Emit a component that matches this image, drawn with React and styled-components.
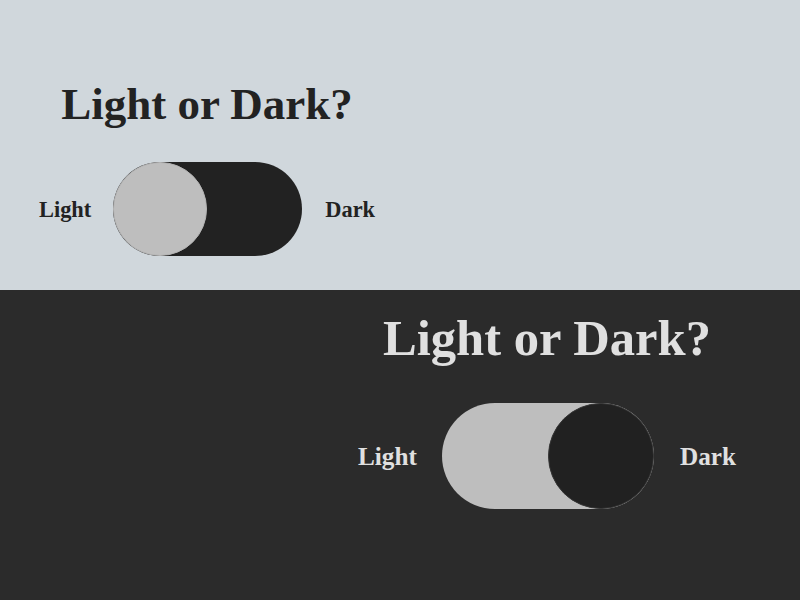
import React from "react";
import styled, { createGlobalStyle } from "styled-components";

const Global = createGlobalStyle`
  html, body { margin: 0; padding: 0; }
  body { font-family: "Liberation Serif", "Times New Roman", serif; }
`;

const themes = {
  light: { bg: "#d0d7dc", text: "#222222", track: "#222222", thumb: "#bebebe", thumbBorder: "#b4b4b4" },
  dark: { bg: "#2b2b2b", text: "#e0e0e0", track: "#bebebe", thumb: "#212121", thumbBorder: "#333333" },
};

const Page = styled.div`
  width: 800px;
  height: 600px;
  display: flex;
  flex-direction: column;
  overflow: hidden;
`;

const Panel = styled.section`
  background: ${(p) => themes[p.$mode].bg};
  color: ${(p) => themes[p.$mode].text};
  height: ${(p) => p.$height}px;
  flex: ${(p) => (p.$grow ? "1" : "none")};
  padding-top: ${(p) => p.$top}px;
  padding-left: ${(p) => p.$left}px;
  box-sizing: border-box;
  display: flex;
  align-items: flex-start;
`;

const Group = styled.div`
  display: flex;
  flex-direction: column;
  align-items: center;
  gap: ${(p) => 35 * p.$s}px;
`;

const Heading = styled.h1`
  margin: 0;
  font-size: ${(p) => 45 * p.$s}px;
  line-height: 1;
  font-weight: 700;
  white-space: nowrap;
`;

const Row = styled.div`
  display: flex;
  align-items: center;
`;

const Label = styled.span`
  font-size: ${(p) => 22.4 * p.$s}px;
  font-weight: 700;
  line-height: 1;
  padding-top: 2px;
  margin-right: ${(p) => p.$mr * p.$s}px;
  margin-left: ${(p) => p.$ml * p.$s}px;
`;

const Track = styled.div`
  width: ${(p) => 189 * p.$s}px;
  height: ${(p) => 94 * p.$s}px;
  border-radius: 999px;
  background: ${(p) => themes[p.$mode].track};
  display: flex;
  justify-content: ${(p) => (p.$mode === "dark" ? "flex-end" : "flex-start")};
  align-items: center;
`;

const Thumb = styled.div`
  width: ${(p) => 94 * p.$s}px;
  height: ${(p) => 94 * p.$s}px;
  border-radius: 50%;
  box-sizing: border-box;
  background: ${(p) => themes[p.$mode].thumb};
  border: 1px solid ${(p) => themes[p.$mode].thumbBorder};
`;

function Switcher({ mode, s }) {
  return (
    <Group $s={s}>
      <Heading $s={s}>Light or Dark?</Heading>
      <Row>
        <Label $s={s} $mr={22} $ml={0}>Light</Label>
        <Track $s={s} $mode={mode}>
          <Thumb $s={s} $mode={mode} />
        </Track>
        <Label $s={s} $mr={0} $ml={23}>Dark</Label>
      </Row>
    </Group>
  );
}

export default function App() {
  return (
    <>
      <Global />
      <Page>
        <Panel $mode="light" $height={290} $top={82} $left={39}>
          <Switcher mode="light" s={1} />
        </Panel>
        <Panel $mode="dark" $grow $top={23} $left={358}>
          <Switcher mode="dark" s={1.125} />
        </Panel>
      </Page>
    </>
  );
}
